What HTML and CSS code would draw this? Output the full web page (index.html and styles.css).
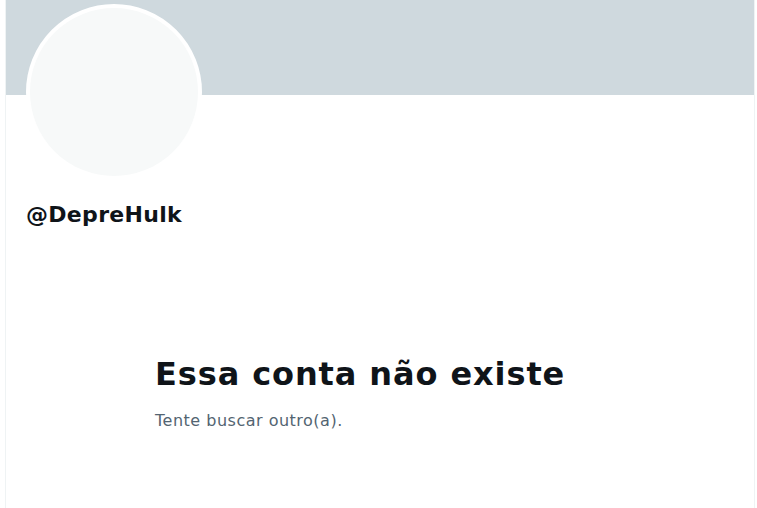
FILE: index.html
```html
<!DOCTYPE html>
<html lang="pt">
<head>
  <meta charset="UTF-8">
  <meta name="viewport" content="width=device-width, initial-scale=1">
  <title>@DepreHulk</title>
  <link rel="stylesheet" href="styles.css">
</head>
<body>

  <main class="column">
    <div class="banner"></div>

    <div class="profile">
      <div class="avatar"></div>
      <div class="handle">@DepreHulk</div>
    </div>

    <div class="empty">
      <h1>Essa conta não existe</h1>
      <p>Tente buscar outro(a).</p>
    </div>
  </main>

</body>
</html>
```

FILE: styles.css
```css
body {
  margin: 0;
  background-color: #fff;
  font-family: 'DejaVu Sans', sans-serif;
  color: #0f1419;
  overflow: hidden;
}
.column {
  margin-left: 5px;
  width: 750px;
  min-height: 508px;
  box-sizing: border-box;
  border-left: 1px solid #eff3f4;
  border-right: 1px solid #eff3f4;
}
.banner {
  height: 95px;
  background-color: #cfd9de;
}
.profile {
  padding: 0 20px;
}
.avatar {
  width: 168px;
  height: 168px;
  margin-top: -91px;
  border: 4px solid #fff;
  border-radius: 50%;
  background-color: #f7f9f9;
}
.handle {
  margin-top: 22px;
  font-size: 22px;
  line-height: 26px;
  font-weight: bold;
  letter-spacing: 0.3px;
}
.empty {
  margin-top: 128px;
  padding-left: 149px;
}
.empty h1 {
  margin: 0;
  font-size: 32px;
  line-height: 36px;
  font-weight: bold;
  letter-spacing: 0.9px;
}
.empty p {
  margin: 19px 0 0;
  font-size: 16px;
  line-height: 20px;
  color: #536471;
  letter-spacing: 0.5px;
}
```
